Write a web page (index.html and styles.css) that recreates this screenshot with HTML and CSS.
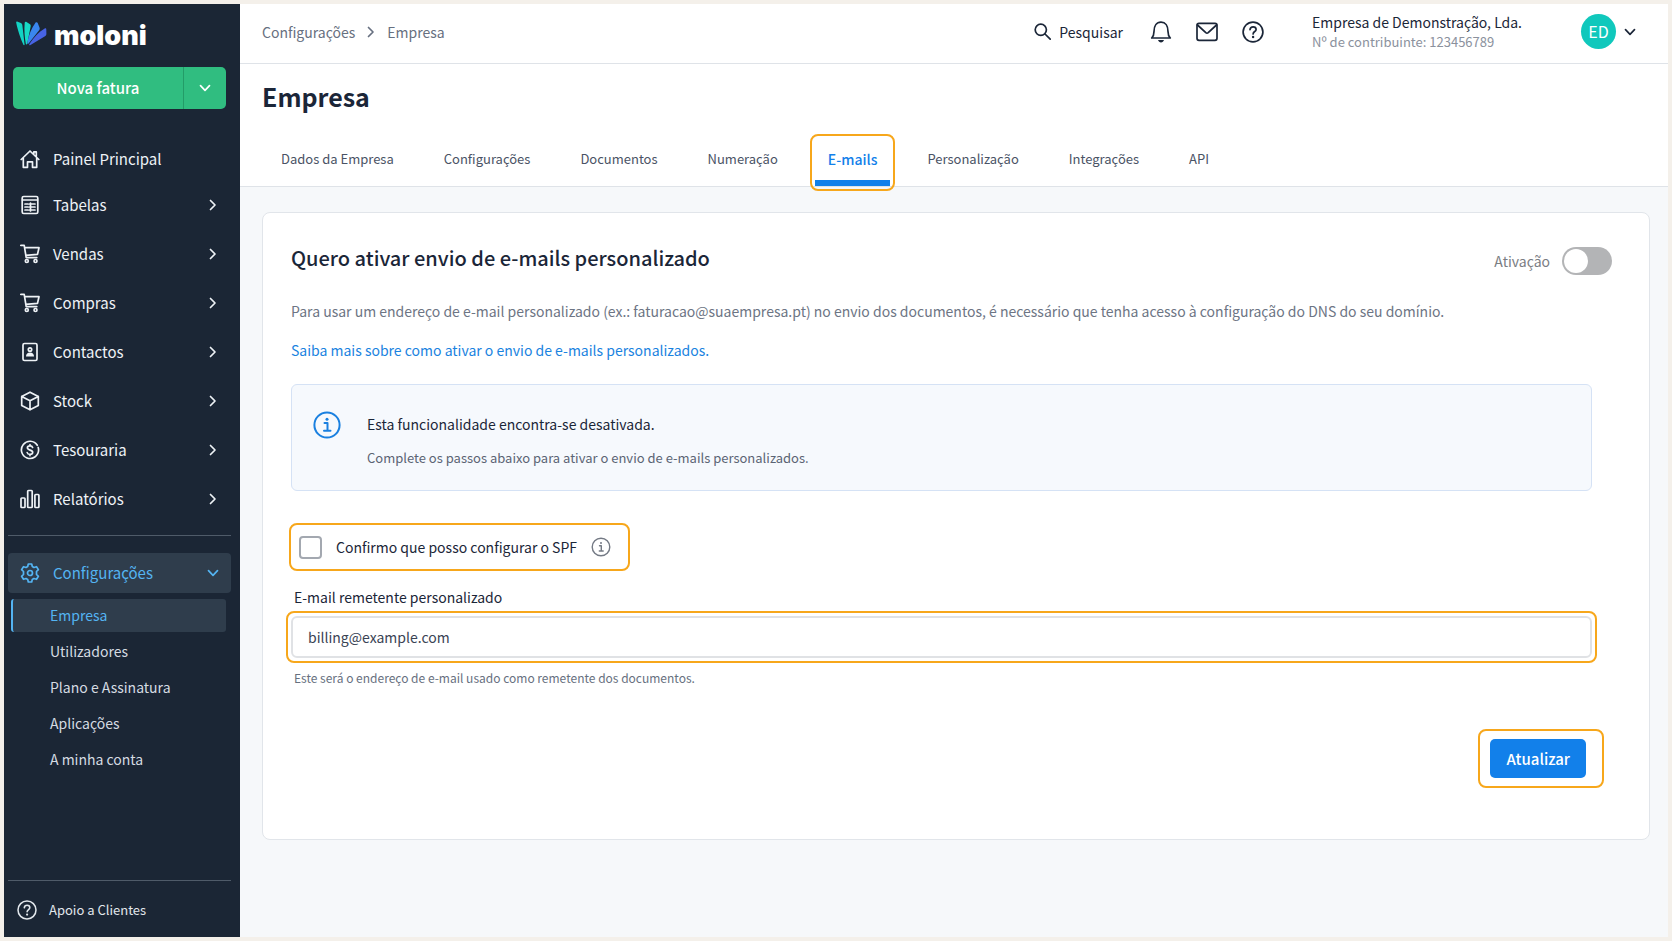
FILE: index.html
```html
<!DOCTYPE html>
<html lang="pt">
  <head>
    <meta charset="UTF-8" />
    <meta name="viewport" content="width=device-width, initial-scale=1.0" />
    <title>Moloni - Empresa</title>
    <link rel="stylesheet" href="styles.css">
  </head>
  <body>
    <!-- shared icons -->
    <svg class="sprite" aria-hidden="true">
      <symbol id="chevron-right" viewBox="0 0 12 12">
        <path d="M3.500 1.500 8 6l-4.500 4.500" />
      </symbol>
      <symbol id="chevron-down" viewBox="0 0 12 12">
        <path d="M1.500 3.700 6 8.300l4.500-4.600" />
      </symbol>
      <symbol id="cart" viewBox="0 0 20 20">
        <path d="M.8 1.300h3.400l2 12.300h10.600M4.600 3.700h14.400l-1.500 6.600-11.800 1" />
        <circle cx="6.800" cy="17" r="1.500" />
        <circle cx="15.500" cy="17" r="1.500" />
      </symbol>
      <symbol id="help" viewBox="0 0 22 22">
        <circle cx="11" cy="11" r="9.900" />
        <path d="M8 8.600c.2-1.800 1.400-2.800 3.100-2.800s3 1.100 3 2.600c0 2-3 2.300-3 4.600" />
        <circle class="dot" cx="11.100" cy="16" r="1.200" />
      </symbol>
    </svg>

    <div class="app">
      <aside class="sidebar">
        <a href="#" class="logo">
          <svg width="31" height="25" viewBox="0 0 31 25">
            <path fill="#12d3c4" d="M.2 1.800C0 .9.800.400 1.600.700L4.900 2c.8.300 1.200.9 1.400 1.700L8.600 23.800c-.2.500-.9.500-1.200 0C5 18.500 1.800 9.500.2 1.800z" />
            <path fill="#17d9c5" d="M8.700 1.800c.1-1 1-1.400 1.800-.8l3.500 2.300c.6.500.8 1.100.7 1.900l-3.500 17.600c-.2 1-1.300 1-1.400 0C8.700 17 8 9 8.700 1.800z" />
            <path fill="#3a86ee" d="M19.600 1.600c.7-.8 1.800-.5 2.100.5l1.900 4.600c.3.800.2 1.500-.3 2.200L12.600 22.400c-.7.800-1.500.3-1.300-.6C12.500 14.500 15.500 7 19.600 1.600z" />
            <path fill="#4763e4" d="M28.700 7.500c.9-.5 1.600 0 1.600 1l.1 4.600c0 .8-.3 1.400-1 1.900L14.500 24.100c-1 .6-1.700-.3-1.100-1.100C17.500 16.800 22.500 11 28.700 7.500z" />
          </svg>
          <span>moloni</span>
        </a>

        <div class="new-invoice">
          <button type="button" class="new-main">Nova fatura</button>
          <button type="button" class="new-more" aria-label="Mais">
            <svg class="icon" width="12" height="12"><use href="#chevron-down" /></svg>
          </button>
        </div>

        <nav class="nav">
          <a href="#" class="nav-item nav-home">
            <svg class="icon" width="20" height="20" viewBox="0 0 20 20">
              <path d="M1.200 10.500 10 2l8.800 8.500M3.300 9v9.300h4.200v-5.500h5v5.500h4.200V9M13.800 4.800V2.900h2.500v4.500" />
            </svg>
            <span>Painel Principal</span>
          </a>
          <a href="#" class="nav-item">
            <svg class="icon" width="20" height="20" viewBox="0 0 20 20">
              <rect x="2.200" y="1.500" width="15.600" height="17" rx="1.500" />
              <path d="M2.500 5h15M5 9h3M9.500 9H15M5 12h3M9.500 12H15M5 15h3M9.500 15H15M10.500 8v8" />
            </svg>
            <span>Tabelas</span>
            <svg class="icon arrow" width="12" height="12"><use href="#chevron-right" /></svg>
          </a>
          <a href="#" class="nav-item">
            <svg class="icon" width="20" height="20"><use href="#cart" /></svg>
            <span>Vendas</span>
            <svg class="icon arrow" width="12" height="12"><use href="#chevron-right" /></svg>
          </a>
          <a href="#" class="nav-item">
            <svg class="icon" width="20" height="20"><use href="#cart" /></svg>
            <span>Compras</span>
            <svg class="icon arrow" width="12" height="12"><use href="#chevron-right" /></svg>
          </a>
          <a href="#" class="nav-item">
            <svg class="icon" width="20" height="20" viewBox="0 0 20 20">
              <rect x="3" y="1.500" width="14" height="17" rx="1.500" />
              <circle cx="10" cy="7.500" r="1.700" />
              <path fill="currentColor" stroke="none" d="M6 14.500c0-2.600 1.800-3.900 4-3.900s4 1.300 4 3.900z" />
            </svg>
            <span>Contactos</span>
            <svg class="icon arrow" width="12" height="12"><use href="#chevron-right" /></svg>
          </a>
          <a href="#" class="nav-item">
            <svg class="icon" width="20" height="20" viewBox="0 0 20 20">
              <path d="M10 1.200 18.300 5.500v9L10 18.800 1.700 14.500v-9zM1.700 5.500 10 9.800l8.300-4.300M10 9.800v9" />
            </svg>
            <span>Stock</span>
            <svg class="icon arrow" width="12" height="12"><use href="#chevron-right" /></svg>
          </a>
          <a href="#" class="nav-item">
            <svg class="icon" width="20" height="20" viewBox="0 0 20 20">
              <path d="M17.300 5.300A8.600 8.600 0 1 0 18.600 10c0-.9-.1-1.700-.4-2.500" />
              <path d="M12.600 7.400c-.3-1-1.300-1.600-2.600-1.600-1.500 0-2.600.8-2.600 2 0 3 5.300 1.600 5.300 4.500 0 1.300-1.200 2.100-2.700 2.100s-2.500-.7-2.800-1.800M10 4.600v1M10 14.600v1" />
            </svg>
            <span>Tesouraria</span>
            <svg class="icon arrow" width="12" height="12"><use href="#chevron-right" /></svg>
          </a>
          <a href="#" class="nav-item">
            <svg class="icon" width="20" height="20" viewBox="0 0 20 20">
              <rect x="1" y="9" width="4" height="9.500" rx=".8" />
              <rect x="7.700" y="1.500" width="4.500" height="17" rx=".8" />
              <rect x="14.900" y="5.500" width="4" height="13" rx=".8" />
            </svg>
            <span>Relatórios</span>
            <svg class="icon arrow" width="12" height="12"><use href="#chevron-right" /></svg>
          </a>
        </nav>

        <nav class="settings">
          <a href="#" class="settings-head">
            <svg class="icon" width="20" height="20" viewBox="0 0 20 20">
              <path d="M8.300 1h3.400l.6 2.600 1.600.9 2.600-.8 1.900 2.900-1.900 1.900v2.900l1.900 1.900-1.900 3-2.600-.8-1.600.9-.6 2.600H8.300l-.6-2.600-1.600-.9-2.600.8-1.900-3 1.900-1.900V8.500L1.600 6.600l1.900-2.900 2.600.8 1.600-.9z" />
              <circle cx="10" cy="10" r="2.500" />
            </svg>
            <span>Configurações</span>
            <svg class="icon arrow" width="12" height="12"><use href="#chevron-down" /></svg>
          </a>
          <a href="#" class="sub-item active">Empresa</a>
          <a href="#" class="sub-item">Utilizadores</a>
          <a href="#" class="sub-item">Plano e Assinatura</a>
          <a href="#" class="sub-item">Aplicações</a>
          <a href="#" class="sub-item">A minha conta</a>
        </nav>

        <a href="#" class="support">
          <svg class="icon" width="20" height="20"><use href="#help" /></svg>
          <span>Apoio a Clientes</span>
        </a>
      </aside>

      <div class="main">
        <header class="topbar">
          <div class="breadcrumb">
            <a href="#">Configurações</a>
            <svg class="icon" width="12" height="12"><use href="#chevron-right" /></svg>
            <span>Empresa</span>
          </div>
          <div class="tools">
            <button type="button" class="tool search">
              <svg class="icon" width="17" height="17" viewBox="0 0 17 17">
                <circle cx="6.800" cy="6.800" r="5.600" />
                <path d="m11 11 5.200 5.200" />
              </svg>
              <span>Pesquisar</span>
            </button>
            <button type="button" class="tool" aria-label="Notificações">
              <svg class="icon" width="22" height="22" viewBox="0 0 22 22">
                <path d="M1.700 17c1.600-1.600 2.300-3.500 2.300-6.500C4 5 6.500 1.200 11 1.200S18 5 18 10.500c0 3 .7 4.900 2.300 6.500z" />
                <path fill="currentColor" stroke="none" d="M8 19h6c-.5 1.600-1.600 2.400-3 2.400S8.500 20.600 8 19z" />
              </svg>
            </button>
            <button type="button" class="tool" aria-label="Mensagens">
              <svg class="icon" width="22" height="22" viewBox="0 0 22 22">
                <rect x="1" y="2.300" width="20" height="17" rx="2" />
                <path d="m1.500 4 8.300 7.600c.8.700 1.600.7 2.400 0L20.500 4" />
              </svg>
            </button>
            <button type="button" class="tool" aria-label="Ajuda">
              <svg class="icon" width="22" height="22"><use href="#help" /></svg>
            </button>
          </div>
          <div class="company">
            <p class="company-name">Empresa de Demonstração, Lda.</p>
            <p class="company-nif">Nº de contribuinte: 123456789</p>
          </div>
          <button type="button" class="account">
            <span class="avatar">ED</span>
            <svg class="icon" width="12" height="12"><use href="#chevron-down" /></svg>
          </button>
        </header>

        <div class="page-head">
          <h1>Empresa</h1>
          <nav class="tabs">
            <a href="#" class="tab">Dados da Empresa</a>
            <a href="#" class="tab">Configurações</a>
            <a href="#" class="tab">Documentos</a>
            <a href="#" class="tab">Numeração</a>
            <a href="#" class="tab active highlight">E-mails</a>
            <a href="#" class="tab">Personalização</a>
            <a href="#" class="tab">Integrações</a>
            <a href="#" class="tab">API</a>
          </nav>
        </div>

        <main class="content">
          <form class="card">
            <div class="card-head">
              <h2>Quero ativar envio de e-mails personalizado</h2>
              <label class="switch">
                <span>Ativação</span>
                <input type="checkbox" name="active" />
              </label>
            </div>
            <p class="intro">Para usar um endereço de e-mail personalizado (ex.: faturacao@suaempresa.pt) no envio dos documentos, é necessário que tenha acesso à configuração do DNS do seu domínio.</p>
            <a href="#" class="more">Saiba mais sobre como ativar o envio de e-mails personalizados.</a>

            <div class="notice">
              <svg class="icon" width="28" height="28" viewBox="0 0 28 28">
                <circle cx="14" cy="14" r="12.600" />
                <path d="M11.500 12h3v7.500M11 19.700h6.500" />
                <circle class="dot" cx="14" cy="8.300" r="1.500" />
              </svg>
              <div>
                <p class="notice-title">Esta funcionalidade encontra-se desativada.</p>
                <p class="notice-text">Complete os passos abaixo para ativar o envio de e-mails personalizados.</p>
              </div>
            </div>

            <div class="confirm">
              <input type="checkbox" id="spf" name="spf" />
              <label for="spf">Confirmo que posso configurar o SPF</label>
              <svg class="icon" width="20" height="20" viewBox="0 0 20 20">
                <circle cx="10" cy="10" r="8.800" />
                <path d="M8.500 8.800h1.800v5M8.300 14h3.900" />
                <circle class="dot" cx="10" cy="5.900" r="1" />
              </svg>
            </div>

            <div class="field">
              <label for="sender">E-mail remetente personalizado</label>
              <div class="input highlight">
                <input type="email" id="sender" name="sender" value="billing@example.com" />
              </div>
              <p class="hint">Este será o endereço de e-mail usado como remetente dos documentos.</p>
            </div>

            <div class="actions">
              <div class="submit-box">
                <button type="submit" class="submit">Atualizar</button>
              </div>
            </div>
          </form>
        </main>
      </div>
    </div>
  </body>
</html>
```
FILE: styles.css
```css
html {
  box-sizing: border-box;
}

*,
*:before,
*:after {
  box-sizing: inherit;
}

body,
h1,
h2,
p {
  margin: 0;
  padding: 0;
}

body {
  font-family: "Noto Sans CJK SC", "Noto Sans", sans-serif;
  font-size: 14px;
  line-height: 24px;
  color: #1b2638;
  background-color: #f4f0ea;
  padding: 4px;
}

a {
  color: inherit;
  text-decoration: none;
}

button,
input {
  font: inherit;
  color: inherit;
  margin: 0;
}

button {
  border: none;
  background: none;
  padding: 0;
  cursor: pointer;
}

.sprite {
  display: none;
}

.icon {
  display: block;
  flex-shrink: 0;
  fill: none;
  stroke: currentColor;
  stroke-width: 1.7;
  stroke-linecap: round;
  stroke-linejoin: round;
}

.dot {
  fill: currentColor;
  stroke: none;
}

.app {
  display: flex;
  min-height: calc(100vh - 8px);
}

/* orange frame around the important controls */
.highlight {
  position: relative;
}

.highlight::after {
  content: "";
  position: absolute;
  inset: -5px;
  border: 2px solid #f7a71b;
  border-radius: 8px;
  pointer-events: none;
}

/* sidebar */
.sidebar {
  width: 236px;
  flex-shrink: 0;
  display: flex;
  flex-direction: column;
  background-color: #1b2635;
  color: #eef2f6;
}

.logo {
  display: flex;
  align-items: center;
  gap: 7px;
  height: 63px;
  padding: 0 12px 4px;
}

.logo span {
  padding-top: 4px;
  font-family: Inter, sans-serif;
  font-size: 27px;
  font-weight: 900;
  color: #fff;
}

.new-invoice {
  display: flex;
  height: 42px;
  margin: 0 14px 28px 9px;
  border-radius: 5px;
  overflow: hidden;
  background-color: #30bd80;
  color: #fff;
}

.new-main {
  flex: 1;
  font-size: 15px;
  font-weight: 500;
}

.new-more {
  width: 43px;
  display: flex;
  align-items: center;
  justify-content: center;
  border-left: 1px solid #239c68;
}

.nav {
  padding: 0 9px 12px 4px;
}

.nav-item,
.settings-head {
  display: flex;
  align-items: center;
  gap: 13px;
  height: 49px;
  padding: 0 12px;
  font-size: 15px;
}

.nav-home {
  height: 43px;
}

.arrow {
  margin-left: auto;
}

.settings {
  display: flex;
  flex-direction: column;
  gap: 3px;
  margin: 0 9px 0 4px;
  padding-top: 17px;
  border-top: 1px solid #4f5b69;
}

.settings-head {
  height: 40px;
  margin-bottom: 3px;
  border-radius: 4px;
  background-color: #2f3d4c;
  color: #54b4f2;
}

.sub-item {
  height: 33px;
  margin: 0 5px 0 3px;
  padding-left: 37px;
  border-left: 2px solid transparent;
  border-radius: 3px;
  line-height: 32px;
  color: #d5dbe2;
}

.sub-item.active {
  border-left-color: #54b4f2;
  background-color: #2f3d4c;
  color: #54b4f2;
}

.support {
  display: flex;
  align-items: center;
  gap: 12px;
  margin: auto 9px 0 4px;
  padding: 17px 9px 15px;
  border-top: 1px solid #4f5b69;
  font-size: 13px;
  color: #e2e7ec;
}

/* top bar */
.main {
  flex: 1;
  min-width: 0;
  display: flex;
  flex-direction: column;
  background-color: #f6f8fa;
}

.topbar {
  display: flex;
  align-items: center;
  height: 60px;
  padding: 0 32px 4px 22px;
  border-bottom: 1px solid #dfe3e8;
  background-color: #fff;
}

.breadcrumb {
  display: flex;
  align-items: center;
  gap: 10px;
  margin-right: auto;
  color: #677080;
}

.tools {
  display: flex;
  align-items: center;
  gap: 24px;
}

.tool {
  display: flex;
  align-items: center;
  gap: 8px;
}

.search {
  margin-right: 3px;
}

.company {
  margin: 0 59px 0 48px;
}

.company-name,
.company-nif {
  line-height: 20px;
}

.company-nif {
  font-size: 13px;
  color: #8b919d;
}

.account {
  display: flex;
  align-items: center;
  gap: 8px;
}

.avatar {
  width: 35px;
  height: 35px;
  border-radius: 50%;
  background-color: #10c8bc;
  color: #fff;
  font-size: 16px;
  line-height: 35px;
}

/* title and tabs */
.page-head {
  padding: 16px 28px 0 22px;
  border-bottom: 1px solid #dfe3e8;
  background-color: #fff;
}

h1 {
  font-size: 25px;
  line-height: 32px;
  font-weight: 700;
}

.tabs {
  display: flex;
  gap: 24px;
  margin-top: 27px;
  padding-left: 6px;
}

.tab {
  height: 47px;
  padding: 0 13px;
  font-size: 13px;
  line-height: 40px;
  color: #4a5365;
}

.tab.active {
  box-shadow: inset 0 -6px 0 #1280ea;
  color: #1280ea;
  font-size: 14px;
  font-weight: 500;
}

/* card */
.content {
  padding: 25px 18px 25px 22px;
}

.card {
  padding: 31px 37px 51px 28px;
  border: 1px solid #e1e5ea;
  border-radius: 8px;
  background-color: #fff;
}

.card-head {
  display: flex;
  align-items: flex-start;
  justify-content: space-between;
}

h2 {
  font-size: 20px;
  line-height: 28px;
  font-weight: 500;
}

.switch {
  display: flex;
  align-items: center;
  gap: 12px;
  margin-top: 3px;
  color: #7a7d83;
}

.switch input {
  appearance: none;
  width: 50px;
  height: 28px;
  padding: 2px;
  border-radius: 14px;
  background-color: #b3b4b6;
}

.switch input::before {
  content: "";
  display: block;
  width: 24px;
  height: 24px;
  border-radius: 50%;
  background-color: #fff;
}

.switch input:checked {
  background-color: #1280ea;
}

.switch input:checked::before {
  margin-left: auto;
}

.intro {
  margin-top: 24px;
  color: #6d7584;
}

.more {
  display: inline-block;
  margin-top: 15px;
  color: #1a83e0;
}

.notice {
  display: flex;
  gap: 26px;
  margin: 22px 20px 32px 0;
  padding: 27px 21px 20px;
  border: 1px solid #d5e2f5;
  border-radius: 6px;
  background-color: #f6f9fd;
}

.notice .icon {
  margin-top: -1px;
  color: #1a80e0;
  stroke-width: 2;
}

.notice-text {
  margin-top: 10px;
  font-size: 13px;
  color: #5b6474;
}

.confirm {
  display: inline-flex;
  align-items: center;
  height: 48px;
  margin-left: -2px;
  padding: 0 17px 0 8px;
  border: 2px solid #f7a71b;
  border-radius: 8px;
}

.confirm input {
  appearance: none;
  width: 23px;
  height: 23px;
  border: 2px solid #a3a8b0;
  border-radius: 4px;
}

.confirm input:checked {
  border-color: #1280ea;
  background-color: #1280ea;
}

.confirm label {
  margin: 0 14px;
}

.confirm .icon {
  color: #737984;
  stroke-width: 1.4;
}

.field {
  display: flex;
  flex-direction: column;
  margin: 14px 20px 41px 0;
}

.field label,
.hint {
  padding-left: 3px;
}

.field .input {
  display: flex;
  margin: 7px 0 10px;
}

.field input {
  flex: 1;
  height: 42px;
  padding: 0 15px;
  border: 2px solid #e0e2e5;
  border-radius: 6px;
  background-color: #fff;
  color: #3a4354;
}

.hint {
  font-size: 12px;
  line-height: 20px;
  color: #677080;
}

.actions {
  display: flex;
  justify-content: flex-end;
  padding-right: 8px;
}

.submit-box {
  padding: 8px 16px 8px 10px;
  border: 2px solid #f7a71b;
  border-radius: 8px;
}

.submit {
  display: block;
  height: 39px;
  padding: 0 16px;
  border-radius: 5px;
  background-color: #1280ea;
  color: #fff;
  font-size: 15px;
  font-weight: 500;
}
```
